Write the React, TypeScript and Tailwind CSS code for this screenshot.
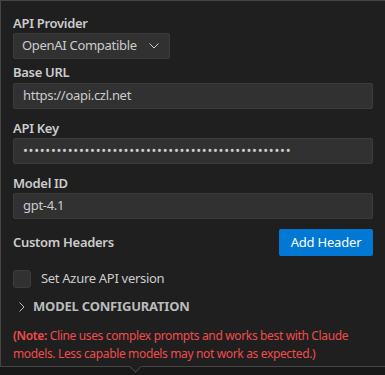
import React from 'react'

function Label({ children, className = '' }: { children: React.ReactNode; className?: string }) {
  return <div className={`h-[18px] leading-[18px] text-[13px] font-semibold tracking-[-0.3px] text-[#cccccc] ${className}`}>{children}</div>
}

function TextBox({ value, className = '' }: { value: string; className?: string }) {
  return (
    <div className={`h-[26px] w-[360px] bg-[#313131] border border-[#3c3c3c] rounded-[2px] px-[9px] flex items-center text-[13px] text-[#cccccc] ${className}`}>
      {value}
    </div>
  )
}

function App() {
  return (
    <div className="w-[385px] h-[375px] bg-[#181818] overflow-hidden" style={{ fontFamily: '"Noto Sans", "Open Sans", sans-serif' }}>
      <div className="relative h-[367px] bg-[#1f1f1f] border-t border-l border-b border-[#454545] pl-[12px] pt-[13px] flex flex-col">
        <Label>API Provider</Label>
        <div className="mt-[1px] h-[26px] w-[157px] bg-[#313131] border border-[#3c3c3c] rounded-[2px] pl-[8px] pr-[10px] flex items-center justify-between text-[13px] tracking-[-0.3px] text-[#cccccc]">
          <span>OpenAI Compatible</span>
          <svg width="10" height="6" viewBox="0 0 10 6" fill="none" stroke="#cccccc" strokeWidth="1">
            <path d="M0.5 0.5 L5 5 L9.5 0.5" />
          </svg>
        </div>

        <Label className="mt-[4px]">Base URL</Label>
        <TextBox className="mt-[2px] tracking-[-0.3px]" value="https://oapi.czl.net" />

        <Label className="mt-[10px]">API Key</Label>
        <TextBox className="mt-[1px] tracking-[0.7px]" value={'•'.repeat(48)} />

        <Label className="mt-[10px]">Model ID</Label>
        <TextBox className="mt-[1px] tracking-[-0.3px]" value="gpt-4.1" />

        <div className="mt-[10px] w-[360px] h-[27px] flex items-center justify-between">
          <span className="text-[13px] font-semibold tracking-[-0.3px] text-[#cccccc]">Custom Headers</span>
          <button className="h-[27px] w-[94px] bg-[#0078d4] rounded-[2px] text-[13px] tracking-[-0.2px] text-white">Add Header</button>
        </div>

        <div className="mt-[14px] h-[18px] flex items-center">
          <div className="w-[18px] h-[18px] bg-[#313131] border border-[#3c3c3c] rounded-[3px]" />
          <span className="ml-[10px] text-[13px] tracking-[-0.3px] text-[#cccccc]">Set Azure API version</span>
        </div>

        <div className="mt-[10px] h-[18px] flex items-center pl-[6px]">
          <svg width="6" height="10" viewBox="0 0 6 10" fill="none" stroke="#bbbbbb" strokeWidth="1">
            <path d="M0.5 0.5 L5 5 L0.5 9.5" />
          </svg>
          <span className="ml-[8px] text-[13px] font-bold text-[#bbbbbb] tracking-[-0.2px]">MODEL CONFIGURATION</span>
        </div>

        <div className="mt-[11px] w-[360px] text-[12px] leading-[18px] tracking-[-0.35px] text-[#f14c4c]">
          <span className="font-semibold">(Note:</span> Cline uses complex prompts and works best with Claude models. Less capable models may not work as expected.)
        </div>

        <div className="absolute left-[130px] bottom-[-5px] w-[9px] h-[9px] rotate-45 bg-[#1f1f1f] border-r border-b border-[#454545]" />
      </div>
    </div>
  )
}

export default App
